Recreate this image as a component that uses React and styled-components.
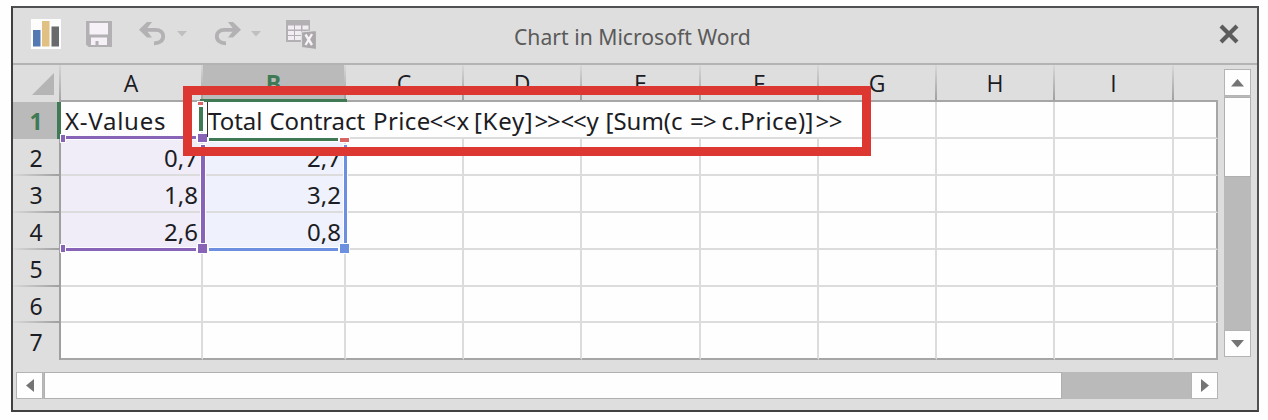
import React from 'react';
import styled, { createGlobalStyle, css } from 'styled-components';

const GlobalStyle = createGlobalStyle`
  * { box-sizing: border-box; }
  body { margin: 0; background: #fefefe; }
`;

const Page = styled.div`
  width: 1268px;
  height: 420px;
  padding: 6px 9px 8px 11px;
  overflow: hidden;
`;

const Window = styled.div`
  width: 1248px;
  height: 406px;
  display: flex;
  flex-direction: column;
  background: #dedede;
  border: 2px solid #505152;
  border-left-color: #3f4041;
  border-bottom-color: #3f4041;
`;

const TitleBar = styled.header`
  height: 57px;
  flex: none;
  display: grid;
  grid-template-columns: 1fr auto 1fr;
  align-items: center;
  border-bottom: 2px solid #b3b3b3;
`;

const Tools = styled.div`
  display: flex;
  align-items: center;
  padding: 0 0 3px 18px;
  height: 100%;
`;

const ToolIcon = styled.svg`
  display: block;
  flex: none;
  margin-left: ${(p) => p.$gap || 0}px;
`;

const Title = styled.h1`
  margin: 2px 0 0;
  width: 242px;
  font: 400 22.5px/30px "Noto Sans", "Open Sans", sans-serif;
  color: #5a5a5a;
  white-space: nowrap;
  transform: scaleX(0.94);
  transform-origin: 0 50%;
`;

const CloseButton = styled.button`
  justify-self: end;
  margin: 0 18px 4px 0;
  padding: 0;
  border: 0;
  background: none;
  height: 20px;
`;

const Body = styled.div`
  display: flex;
  height: 295px;
  flex: none;
`;

const Sheet = styled.div`
  position: relative;
  width: 1205px;
  display: grid;
  grid-template-columns: 48px 142px 143px 118px 118px 119px 118px 118px 118px 119px 44px;
  grid-template-rows: 37px 37px 37px 37px 37px 37px 36px 37px;
  font-family: "Noto Sans", "Open Sans", sans-serif;
  font-size: 24px;
  color: #1c1c24;
`;

const headerBase = css`
  display: flex;
  align-items: center;
  justify-content: center;
  background: ${(p) => (p.$active ? '#bababa' : '#dedede')};
  color: ${(p) => (p.$active ? '#3f7a55' : '#1c1c24')};
  font-weight: ${(p) => (p.$active ? 700 : 400)};
`;

const Corner = styled.div`
  display: flex;
  justify-content: flex-end;
  align-items: flex-end;
  padding: 0 5px 7px 0;
  border-right: 2px solid;
  border-image: linear-gradient(#d8d8d8, #a0a0a0) 2;
`;

const ColumnHeader = styled.div`
  ${headerBase}
  font-family: "Open Sans", "Noto Sans", sans-serif;
  font-size: 23px;
  border-bottom: 2px solid #a6a6a6;
  padding: 1px 2px 0 0;
  background-image: ${(p) => (p.$last ? 'none' : 'linear-gradient(#d8d8d8, #a0a0a0)')};
  background-size: 2px 100%;
  background-position: right top;
  background-repeat: no-repeat;
`;

const RowHeader = styled.div`
  ${headerBase}
  font-size: 23px;
  border-right: ${(p) => (p.$active ? '4px solid #3f7a55' : '2px solid #a0a0a0')};
  padding: ${(p) => (p.$active ? '3px 0 2px 2px' : '3px 0 2px')};
  background-image: ${(p) =>
    p.$last || p.$active ? 'none' : 'linear-gradient(90deg, #d8d8d8, #a0a0a0)'};
  background-size: 100% 2px;
  background-position: left bottom;
  background-repeat: no-repeat;
`;

const Cell = styled.div`
  display: flex;
  align-items: center;
  justify-content: ${(p) => (p.$numeric ? 'flex-end' : 'flex-start')};
  padding: ${(p) => (p.$numeric ? '1px 3px 0 0' : '1px 0 0 4px')};
  background: ${(p) => p.$tint || '#fefefe'};
  border-right: 2px solid ${(p) => (p.$lastCol ? '#a6a6a6' : '#dcdcdc')};
  border-bottom: 2px solid ${(p) => (p.$lastRow ? '#a6a6a6' : '#dcdcdc')};
  letter-spacing: ${(p) => (p.$numeric ? 0 : 0.75)}px;
  white-space: nowrap;
`;

/* One token of the template expression; tokens keep a fixed advance. */
const Token = styled.span`
  flex: none;
  width: ${(p) => p.$w}px;
  letter-spacing: ${(p) => p.$spacing || 0}px;
  white-space: pre;
`;

/* Overlays that sit above the grid: range outlines, the cell editor, the callout. */
const Overlay = styled.div`
  position: absolute;
  left: ${(p) => p.$x - 13}px;
  top: ${(p) => p.$y - 65}px;
  width: ${(p) => p.$w}px;
  height: ${(p) => p.$h}px;
`;

const RangeMark = styled(Overlay)`
  background: ${(p) => p.$color};
  box-shadow: 0 0 0 ${(p) => (p.$halo ?? 1)}px #fdfdff;
`;

const Editor = styled(Overlay)`
  display: flex;
  align-items: center;
  padding-top: 1px;
  background: #fefefe;
  border-left: 1px solid #333;
  white-space: nowrap;
`;

const Callout = styled(Overlay)`
  border: 9px solid #dc3730;
`;

const VerticalScroll = styled.div`
  display: flex;
  flex-direction: column;
  width: 27px;
  height: 288px;
  margin: 4px 0 0 6px;
  background: #bababa;
`;

const HorizontalScroll = styled.div`
  display: flex;
  width: 1202px;
  height: 27px;
  margin: 12px 0 0 3px;
  background: #bababa;
`;

const ScrollButton = styled.button`
  display: flex;
  align-items: center;
  justify-content: center;
  flex: none;
  width: 27px;
  height: 27px;
  padding: 0;
  border: 1.5px solid #b4b4b4;
  background: #fefefe;
`;

const Thumb = styled.div`
  background: #fefefe;
  border: 1px solid #b0b0b0;
  ${(p) =>
    p.$vertical
      ? 'width: 27px; height: 80px; margin-top: 1px;'
      : 'width: 1018px; height: 27px; margin-left: 1px;'}
`;

const Spacer = styled.div`
  flex: 1;
`;

const ChartIcon = () => (
  <ToolIcon width="30" height="30" viewBox="0 0 30 30">
    <rect width="30" height="30" fill="#fdfdfd" />
    <rect x="2" y="11" width="7.5" height="16.5" fill="#5379b3" />
    <rect x="11" y="2" width="7.5" height="25.5" fill="#e0c083" />
    <rect x="20.5" y="7.500" width="7.500" height="20" fill="#686a6b" />
  </ToolIcon>
);

const SaveIcon = () => (
  <ToolIcon $gap={25} width="27" height="26" viewBox="0 0 27 26">
    <path fill="#b3b0b4" d="M0 0H26V26H2.500L0 23.500Z" />
    <rect x="3.500" y="2" width="18.500" height="11.500" fill="#f6f0f7" />
    <path fill="#f6f0f7" d="M5 16.500H21V24H12.500V20H9.500V24H5Z" />
  </ToolIcon>
);

const UndoIcon = ({ flip, gap }) => (
  <ToolIcon $gap={gap} width="28" height="26" viewBox="0 0 28 26">
    <g transform={flip ? 'translate(28 0) scale(-1 1)' : undefined}>
      <path
        d="M4 8.800H16.500C21.500 8.800 24.200 11.700 24.200 15.300C24.200 19.300 21 22.300 15 22.300"
        fill="none"
        stroke="#b3b1b3"
        strokeWidth="3.800"
      />
      <path d="M0 8.800L8 1H13L7 8.800L13 16.500H8Z" fill="#b3b1b3" />
    </g>
  </ToolIcon>
);

const Caret = ({ gap }) => (
  <ToolIcon $gap={gap} width="10" height="6" viewBox="0 0 10 6">
    <path d="M0 0H10L5 5.500Z" fill="#c0bfc0" />
  </ToolIcon>
);

const TableIcon = () => (
  <ToolIcon $gap={25} width="31" height="31" viewBox="0 0 31 31">
    <rect x="0" y="1" width="24" height="22" fill="#b3b0b3" />
    <g fill="#f1edf2">
      {[6.5, 12, 17].map((y) =>
        [2, 9, 16.5].map((x) => (
          <rect key={`${x}-${y}`} x={x} y={y} width="6" height="4" />
        ))
      )}
    </g>
    <path d="M15.500 13L30.500 11.500V30.500L15.500 28.500Z" fill="#aaa8aa" stroke="#dedede" strokeWidth="1.200" />
    <path d="M19.500 15.500L26 26M26 15L19.500 26" stroke="#f6f2f6" strokeWidth="2.400" fill="none" />
  </ToolIcon>
);

const arrows = {
  up: 'M0 7.500L6.500 0L13 7.500Z',
  down: 'M0 0H13L6.500 7.500Z',
  left: 'M8 0V13L0 6.500Z',
  right: 'M0 0V13L8 6.500Z',
};

const Arrow = ({ dir }) => (
  <svg width={dir === 'up' || dir === 'down' ? 13 : 8} height={dir === 'up' || dir === 'down' ? 8 : 13}>
    <path d={arrows[dir]} fill="#747474" />
  </svg>
);

const columns = ['A', 'B', 'C', 'D', 'E', 'F', 'G', 'H', 'I', ''];
const rows = [
  ['X-Values', ''],
  ['0,7', '2,7'],
  ['1,8', '3,2'],
  ['2,6', '0,8'],
  [],
  [],
  [],
];

const tokens = [
  ['Total ', 61.5, 0],
  ['Contract ', 103.5, -0.1],
  ['Price', 56.5, 0.4],
  ['<<', 27, -0.8],
  ['x ', 17.5, 0],
  ['[Key]', 60.5, 0.7],
  ['>>', 26, -1.2],
  ['<<', 26, -1.2],
  ['y ', 19, 0],
  ['[Sum(c ', 84.5, 0],
  ['=> ', 31.5, -0.8],
  ['c.Price)]', 94, 0.4],
  ['>>', 27, -0.4],
];

const PURPLE = '#8764b8';
const BLUE = '#6c8fe0';
const GREEN = '#3f7a55';
const RED = '#d86464';

const marks = [
  [66, 136, 130, 3, PURPLE],
  [201, 145, 4, 98, PURPLE],
  [66, 248, 130, 3, PURPLE],
  [344, 145, 3, 98, BLUE],
  [209, 248, 129, 3, BLUE],
  [61, 135, 4, 7, PURPLE],
  [61, 245, 4, 7, PURPLE],
  [198, 134, 9, 8, PURPLE],
  [198, 244, 9, 9, PURPLE],
  [340, 244, 9, 9, BLUE],
];

const tintFor = (r, c) => {
  if (r < 1 || r > 3) return undefined;
  return c === 0 ? '#f1edf8' : c === 1 ? '#eff2fc' : undefined;
};

export default function App() {
  return (
    <Page>
      <GlobalStyle />
      <Window>
        <TitleBar>
          <Tools>
            <ChartIcon />
            <SaveIcon />
            <UndoIcon gap={26} />
            <Caret gap={10} />
            <UndoIcon flip gap={26} />
            <Caret gap={10} />
            <TableIcon />
          </Tools>
          <Title>Chart in Microsoft Word</Title>
          <CloseButton aria-label="Close">
            <svg width="20" height="20" viewBox="0 0 20 20">
              <path d="M2 2L18 18M18 2L2 18" stroke="#5c5c5c" strokeWidth="4.200" />
            </svg>
          </CloseButton>
        </TitleBar>
        <Body>
          <Sheet>
            <Corner>
              <svg width="22" height="22">
                <path d="M22 0V22H0Z" fill="#b5b5b5" />
              </svg>
            </Corner>
            {columns.map((name, i) => (
              <ColumnHeader key={i} $active={name === 'B'} $last={i === columns.length - 1}>
                {name}
              </ColumnHeader>
            ))}
            {rows.map((row, r) => (
              <React.Fragment key={r}>
                <RowHeader $active={r === 0} $last={r === rows.length - 1}>{r + 1}</RowHeader>
                {columns.map((_, c) => (
                  <Cell
                    key={c}
                    $numeric={r > 0}
                    $tint={tintFor(r, c)}
                    $lastCol={c === columns.length - 1}
                    $lastRow={r === rows.length - 1}
                  >
                    {row[c]}
                  </Cell>
                ))}
              </React.Fragment>
            ))}
            {marks.map(([x, y, w, h, color]) => (
              <RangeMark key={`${x}-${y}`} $x={x} $y={y} $w={w} $h={h} $color={color} />
            ))}
            <Editor $x={207} $y={102} $w={640} $h={35}>
              {tokens.map(([text, w, spacing], i) => (
                <Token key={i} $w={w} $spacing={spacing}>{text}</Token>
              ))}
            </Editor>
            <RangeMark $x={200} $y={99} $w={147} $h={3} $color={GREEN} $halo={0} />
            <RangeMark $x={199} $y={107} $w={4} $h={24} $color={GREEN} />
            <RangeMark $x={209} $y={138} $w={129} $h={3} $color={GREEN} />
            <RangeMark $x={198} $y={102} $w={5} $h={3} $color={RED} />
            <RangeMark $x={340} $y={138} $w={9} $h={4} $color={RED} />
            <Callout $x={183} $y={86} $w={688} $h={70} />
          </Sheet>
          <VerticalScroll>
            <ScrollButton aria-label="Scroll up"><Arrow dir="up" /></ScrollButton>
            <Thumb $vertical />
            <Spacer />
            <ScrollButton aria-label="Scroll down"><Arrow dir="down" /></ScrollButton>
          </VerticalScroll>
        </Body>
        <HorizontalScroll>
          <ScrollButton aria-label="Scroll left"><Arrow dir="left" /></ScrollButton>
          <Thumb />
          <Spacer />
          <ScrollButton aria-label="Scroll right"><Arrow dir="right" /></ScrollButton>
        </HorizontalScroll>
      </Window>
    </Page>
  );
}
